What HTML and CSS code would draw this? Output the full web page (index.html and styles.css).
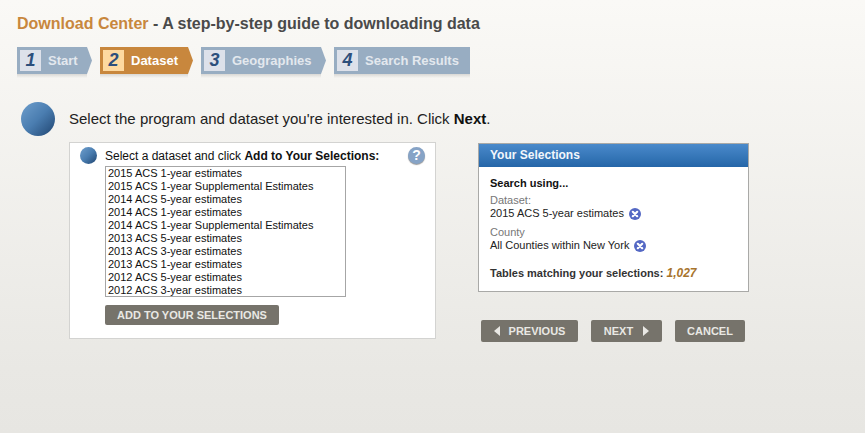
FILE: index.html
```html
<!DOCTYPE html>
<html lang="en">
<head>
    <meta charset="UTF-8">
    <meta name="viewport" content="width=device-width, initial-scale=1.0">
    <title>Download Center</title>
    <link rel="stylesheet" href="styles.css">
</head>
<body>
    <h1 class="title"><span class="title-accent">Download Center</span> - A step-by-step guide to downloading data</h1>

    <div class="steps">
        <div class="step step-start"><div class="step-tab"><span class="step-num">1</span>Start</div></div>
        <div class="step step-dataset step-active"><div class="step-tab"><span class="step-num">2</span>Dataset</div></div>
        <div class="step step-geo"><div class="step-tab"><span class="step-num">3</span>Geographies</div></div>
        <div class="step step-results"><div class="step-tab step-tab-flat"><span class="step-num">4</span>Search Results</div></div>
    </div>

    <div class="intro">
        <span class="ball ball-large"></span>
        <p>Select the program and dataset you're interested in. Click <b>Next</b>.</p>
    </div>

    <div class="columns">
        <div class="picker">
            <div class="picker-head">
                <span class="ball ball-small"></span>
                <span class="picker-label">Select a dataset and click <b>Add to Your Selections:</b></span>
                <span class="help">?</span>
            </div>
            <div class="dataset-list">
                <div>2015 ACS 1-year estimates</div>
                <div>2015 ACS 1-year Supplemental Estimates</div>
                <div>2014 ACS 5-year estimates</div>
                <div>2014 ACS 1-year estimates</div>
                <div>2014 ACS 1-year Supplemental Estimates</div>
                <div>2013 ACS 5-year estimates</div>
                <div>2013 ACS 3-year estimates</div>
                <div>2013 ACS 1-year estimates</div>
                <div>2012 ACS 5-year estimates</div>
                <div>2012 ACS 3-year estimates</div>
            </div>
            <button class="btn btn-add">ADD TO YOUR SELECTIONS</button>
        </div>

        <div class="side">
            <div class="selections">
                <div class="selections-head">Your Selections</div>
                <div class="selections-body">
                    <div class="search-using">Search using...</div>
                    <div class="sel-label">Dataset:</div>
                    <div class="sel-value">2015 ACS 5-year estimates
                        <svg class="remove" viewBox="0 0 12 12"><circle cx="6" cy="6" r="6" fill="#5468c4"/><path d="M3.8 3.8l4.4 4.4M8.2 3.8l-4.4 4.4" stroke="#fff" stroke-width="2.2" stroke-linecap="round"/></svg>
                    </div>
                    <div class="sel-label sel-label-county">County</div>
                    <div class="sel-value">All Counties within New York
                        <svg class="remove" viewBox="0 0 12 12"><circle cx="6" cy="6" r="6" fill="#5468c4"/><path d="M3.8 3.8l4.4 4.4M8.2 3.8l-4.4 4.4" stroke="#fff" stroke-width="2.2" stroke-linecap="round"/></svg>
                    </div>
                    <div class="matching">Tables matching your selections: <i>1,027</i></div>
                </div>
            </div>
            <div class="nav-buttons">
                <button class="btn btn-nav btn-prev"><span class="arrow-left"></span>PREVIOUS</button>
                <button class="btn btn-nav btn-next">NEXT<span class="arrow-right"></span></button>
                <button class="btn btn-nav btn-cancel">CANCEL</button>
            </div>
        </div>
    </div>
</body>
</html>
```

FILE: styles.css
```css
html {
    height: 100%;
}
body {
    margin: 0;
    min-height: 433px;
    box-sizing: border-box;
    padding: 14px 0 0 17px;
    overflow: hidden;
    font-family: "Liberation Sans", Arial, sans-serif;
    color: #222;
    background: linear-gradient(#faf9f6, #e9e8e4 85%, #e7e6e2);
}
.title {
    margin: 0;
    font-size: 16px;
    line-height: 19px;
    font-weight: bold;
    color: #4a4a4a;
}
.title-accent {
    color: #c8873d;
}
.steps {
    display: flex;
    gap: 8px;
    margin-top: 14px;
}
.step {
    padding-bottom: 4px;
    background: linear-gradient(#d9d8d5, rgba(240, 240, 238, 0)) no-repeat left bottom / calc(100% - 5px) 4px;
}
.step-tab {
    box-sizing: border-box;
    display: flex;
    align-items: center;
    height: 27px;
    padding-left: 3px;
    white-space: nowrap;
    font-size: 13px;
    font-weight: bold;
    color: #e3e8ee;
    background: #98adc2;
    clip-path: polygon(0 0, calc(100% - 5px) 0, 100% 50%, calc(100% - 5px) 100%, 0 100%);
}
.step-tab-flat {
    clip-path: none;
}
.step-num {
    width: 21px;
    height: 21px;
    margin-right: 7px;
    text-align: center;
    line-height: 21px;
    font-size: 18px;
    font-style: italic;
    color: #2d4f7c;
    background: #dde1ea;
}
.step-active .step-tab {
    color: #fff;
    background: #c8873d;
}
.step-active .step-num {
    background: #fdd9a0;
}
.step-start { width: 75px; }
.step-dataset { width: 93px; }
.step-geo { width: 125px; }
.step-results { width: 136px; background-size: 100% 4px; }

.intro {
    display: flex;
    align-items: center;
    gap: 14px;
    margin: 24px 0 0 4px;
}
.intro p {
    margin: 0 0 2px;
    font-size: 15px;
    color: #222;
}
.intro b {
    color: #111;
}
.ball {
    display: block;
    flex: none;
    border-radius: 50%;
    background: linear-gradient(135deg, #6f9fcd, #4a7db0 50%, #1f4470);
}
.ball-large {
    width: 34px;
    height: 34px;
}
.ball-small {
    width: 17px;
    height: 17px;
}

.columns {
    display: flex;
    align-items: flex-start;
    gap: 42px;
    margin: 6px 0 0 52px;
}
.picker {
    box-sizing: border-box;
    width: 367px;
    height: 197px;
    padding: 4px 10px 0 10px;
    background: #fff;
    border: 1px solid #d3d3d1;
}
.picker-head {
    display: flex;
    align-items: center;
    height: 17px;
}
.picker-label {
    margin-left: 8px;
    font-size: 12px;
    color: #111;
}
.help {
    width: 17px;
    height: 17px;
    margin-left: auto;
    border-radius: 50%;
    text-align: center;
    font-size: 14px;
    line-height: 17px;
    font-weight: bold;
    color: #fff;
    background: #86a3c6;
    box-shadow: 0 1px 1px #999;
}
.dataset-list {
    box-sizing: border-box;
    width: 241px;
    height: 131px;
    margin: 2px 0 0 25px;
    padding: 0 2px;
    border: 1px solid #a6a6a6;
    overflow: hidden;
    font-size: 11px;
    line-height: 13px;
    color: #111;
}
.btn {
    border: none;
    border-radius: 2px;
    padding: 0;
    font-family: inherit;
    font-weight: bold;
    color: #e9e8e4;
    background: #76736b;
}
.btn-add {
    display: block;
    width: 174px;
    height: 20px;
    margin: 8px 0 0 25px;
    font-size: 11px;
}
.side {
    width: 271px;
    margin-top: 1px;
}
.selections {
    box-sizing: border-box;
    height: 149px;
    background: #fff;
    border: 1px solid #a9a9a7;
}
.selections-head {
    height: 23px;
    padding-left: 11px;
    line-height: 23px;
    font-size: 12px;
    font-weight: bold;
    color: #f2f6fb;
    background: linear-gradient(#4a8acb, #2566a8);
}
.selections-body {
    padding: 10px 11px 0;
    font-size: 11px;
    line-height: 13px;
    color: #222;
}
.search-using {
    font-weight: bold;
    color: #111;
}
.sel-label {
    margin-top: 4px;
    color: #777;
}
.sel-label-county {
    margin-top: 6px;
}
.sel-value {
    display: flex;
    align-items: center;
    gap: 5px;
}
.remove {
    width: 12px;
    height: 12px;
}
.matching {
    margin-top: 15px;
    font-weight: bold;
    color: #333;
}
.matching i {
    font-size: 12px;
    color: #a8742d;
}
.nav-buttons {
    display: flex;
    gap: 13px;
    margin: 28px 0 0 3px;
}
.btn-nav {
    display: flex;
    align-items: center;
    justify-content: center;
    height: 22px;
    font-size: 11px;
}
.btn-prev { width: 97px; gap: 9px; }
.btn-next { width: 71px; gap: 10px; }
.btn-cancel { width: 70px; }
.arrow-left {
    border: 5px solid transparent;
    border-left: none;
    border-right: 6px solid #e9e8e4;
}
.arrow-right {
    border: 5px solid transparent;
    border-right: none;
    border-left: 6px solid #e9e8e4;
}
```
